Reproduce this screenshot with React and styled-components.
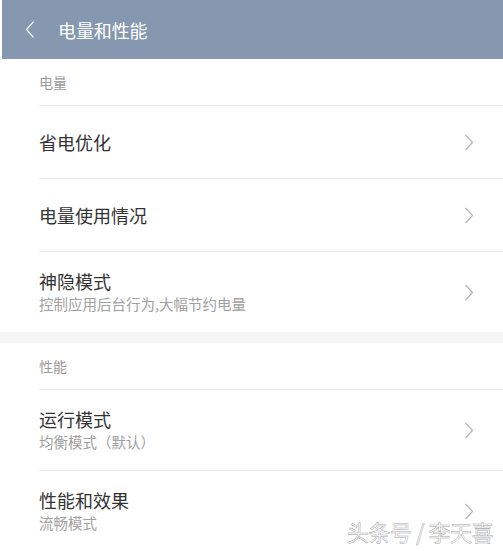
import React from 'react';
import styled, { createGlobalStyle } from 'styled-components';

const GlobalStyle = createGlobalStyle`
  html, body {
    margin: 0;
    padding: 0;
    background: #ffffff;
  }
  body {
    font-family: "Noto Sans CJK SC", "Noto Sans", sans-serif;
  }
`;

const sections = [
  {
    label: '电量',
    items: [
      { title: '省电优化' },
      { title: '电量使用情况' },
      { title: '神隐模式', sub: '控制应用后台行为,大幅节约电量' },
    ],
  },
  {
    label: '性能',
    items: [
      { title: '运行模式', sub: '均衡模式（默认）' },
      { title: '性能和效果', sub: '流畅模式' },
    ],
  },
];

const Chevron = ({ color, left }) => (
  <svg width="10" height="17" viewBox="0 0 10 17" fill="none">
    <path
      d={left ? 'M8.5 1 L1.5 8.5 L8.5 16' : 'M1.5 1 L8.5 8.5 L1.5 16'}
      stroke={color}
      strokeWidth="1.2"
    />
  </svg>
);

export default function App() {
  return (
    <>
      <GlobalStyle />
      <Screen>
        <Header>
          <Back>
            <Chevron color="#ffffff" left />
          </Back>
          <HeaderTitle>电量和性能</HeaderTitle>
        </Header>
        {sections.map((section, i) => (
          <Section key={section.label} $first={i === 0}>
            <Label>{section.label}</Label>
            {section.items.map(item => (
              <Row key={item.title} $tall={!!item.sub}>
                <Texts>
                  <Title>{item.title}</Title>
                  {item.sub && <Sub>{item.sub}</Sub>}
                </Texts>
                <Arrow>
                  <Chevron color="#b3b3b3" />
                </Arrow>
              </Row>
            ))}
          </Section>
        ))}
        <Watermark>头条号 / 李天喜</Watermark>
      </Screen>
    </>
  );
}

const Screen = styled.div`
  position: relative;
  width: 503px;
  height: 551px;
  overflow: hidden;
  background: #ffffff;
`;

const Header = styled.div`
  display: flex;
  align-items: center;
  height: 59px;
  margin-left: 2px;
  background: #8598b0;
`;

const Back = styled.div`
  display: flex;
  align-items: center;
  width: 10px;
  margin-left: 23px;
  margin-right: 23px;
  transform: scale(1, 1.05);
`;

const HeaderTitle = styled.div`
  color: #ffffff;
  font-size: 18px;
  line-height: 24px;
  letter-spacing: -0.1px;
`;

const Section = styled.div`
  border-top: ${p => (p.$first ? 'none' : '11px solid #f5f5f5')};
`;

const Label = styled.div`
  height: 46px;
  box-sizing: border-box;
  padding: 13px 0 0 39px;
  font-size: 14px;
  line-height: 20px;
  color: #9a9a9a;
`;

const Row = styled.div`
  display: flex;
  align-items: center;
  justify-content: space-between;
  box-sizing: border-box;
  height: ${p => (p.$tall ? '81px' : '73px')};
  margin-left: 39px;
  border-top: 1px solid #ececec;
`;

const Texts = styled.div`
  display: flex;
  flex-direction: column;
`;

const Title = styled.div`
  font-size: 18px;
  line-height: 24px;
  color: #333333;
`;

const Sub = styled.div`
  font-size: 14.5px;
  line-height: 22px;
  color: #a0a0a0;
`;

const Arrow = styled.div`
  display: flex;
  margin-right: 29px;
`;

const Watermark = styled.div`
  position: absolute;
  left: 347px;
  top: 517px;
  font-size: 22px;
  line-height: 28px;
  color: #ffffff;
  -webkit-text-stroke: 0.5px #a8a8a8;
  letter-spacing: -0.5px;
  white-space: nowrap;
`;
